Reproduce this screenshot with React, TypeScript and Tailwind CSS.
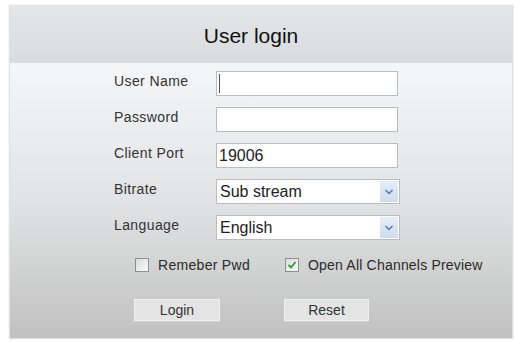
import { ChevronDown } from 'lucide-react'

const font = { fontFamily: '"Liberation Sans", Arial, sans-serif' }

function Field({ label, value, caret }: { label: string; value?: string; caret?: boolean }) {
  return (
    <div className="flex items-start">
      <div className="flex h-[25px] w-[102px] items-center pb-[4px] text-[14px] tracking-[0.4px] text-[#333]">
        {label}
      </div>
      <div className="flex h-[25px] w-[182px] items-center border border-[#b9bcc0] bg-white pl-[2px] text-[16px] text-[#222]">
        {caret && <span className="h-[19px] w-px bg-[#555]" />}
        {value}
      </div>
    </div>
  )
}

function Select({ label, value }: { label: string; value: string }) {
  return (
    <div className="flex items-start">
      <div className="flex h-[25px] w-[102px] items-center pb-[4px] text-[14px] tracking-[0.4px] text-[#333]">
        {label}
      </div>
      <div className="flex h-[25px] w-[184px] items-center border border-[#b9bcc0] bg-white pl-[3px] text-[16px] text-[#222]">
        <span className="flex-1">{value}</span>
        <span className="mr-[1px] flex h-[21px] w-[18px] items-center justify-center bg-gradient-to-b from-[#e6eef8] to-[#cddcee]">
          <ChevronDown size={12} strokeWidth={3.5} className="text-[#5b7fb5]" />
        </span>
      </div>
    </div>
  )
}

function Checkbox({ checked }: { checked?: boolean }) {
  return (
    <span className="flex h-[14px] w-[14px] items-center justify-center border border-[#8e8f8f] bg-gradient-to-br from-[#dcdcdc] to-[#fafafa]">
      {checked && (
        <svg width="10" height="10" viewBox="0 0 10 10">
          <path d="M1.5 5 L4 7.5 L8.5 2" fill="none" stroke="#2f9a3a" strokeWidth="1.8" />
        </svg>
      )}
    </span>
  )
}

export default function App() {
  return (
    <div className="h-[342px] w-[518px] bg-white pl-[9px] pt-[5px]" style={font}>
      <div className="flex h-[334px] w-[504px] flex-col border border-[#e0e0e0] shadow-[0_0_1px_rgba(0,0,0,0.2)]">
        <div className="flex h-[57px] items-center justify-center bg-gradient-to-b from-[#e4e6e8] to-[#d9dbdd] pr-[20px] pt-[2px] text-[21px] text-[#111]">
          User login
        </div>
        <div className="flex flex-1 flex-col bg-gradient-to-b from-[#f4f6f8] via-[#e2e3e4] to-[#c1c1c1] pl-[104px] pt-[8px]">
          <div className="flex flex-col gap-[11px]">
            <Field label="User Name" caret />
            <Field label="Password" />
            <Field label="Client Port" value="19006" />
            <Select label="Bitrate" value="Sub stream" />
            <Select label="Language" value="English" />
          </div>
          <div className="ml-[21px] mt-[17px] flex h-[16px] items-center text-[14px] text-[#2a2a2a]">
            <div className="flex w-[150px] items-center gap-[9px]">
              <Checkbox />
              <span className="tracking-[0.3px]">Remeber Pwd</span>
            </div>
            <div className="flex items-center gap-[9px]">
              <Checkbox checked />
              <span className="tracking-[0.2px]">Open All Channels Preview</span>
            </div>
          </div>
          <div className="ml-[20px] mt-[26px] flex text-[14px] text-[#333]">
            <div className="w-[150px]">
              <button className="h-[22px] w-[86px] border border-[#f0f0f0] bg-[#e4e4e4] shadow-[0_1px_0_#d0d0d0]">
                Login
              </button>
            </div>
            <button className="h-[22px] w-[85px] border border-[#f0f0f0] bg-[#e4e4e4] shadow-[0_1px_0_#d0d0d0]">
              Reset
            </button>
          </div>
        </div>
      </div>
    </div>
  )
}
